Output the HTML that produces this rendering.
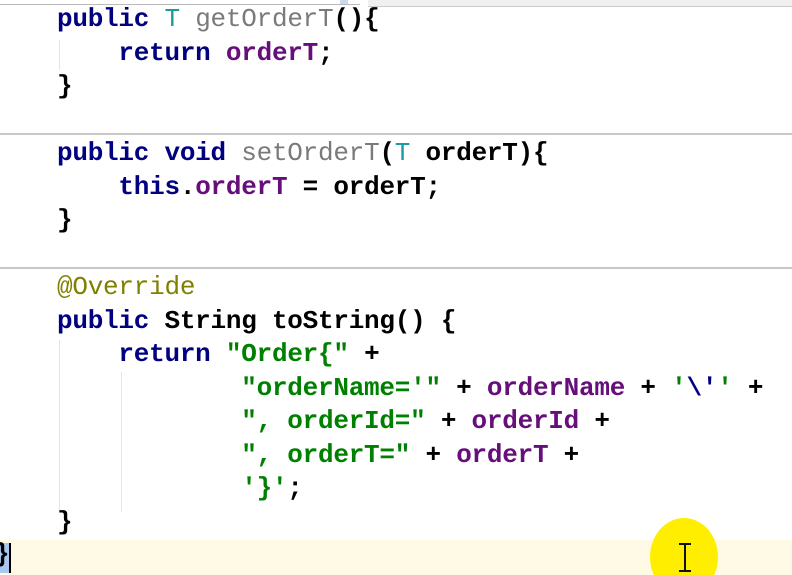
<!DOCTYPE html>
<html><head><meta charset="utf-8"><style>
html,body{margin:0;padding:0;width:792px;height:575px;overflow:hidden;background:#fff;position:relative}
.code{position:absolute;left:57px;top:3px;font-family:"Liberation Mono",monospace;font-size:26px;font-weight:bold;line-height:33.5px;white-space:pre;color:#000;letter-spacing:-0.25px}
.k{color:#000080}.f{color:#660e7a}.s{color:#008000}.g{color:#7a7a7a;font-weight:normal}.t{color:#20999d;font-weight:normal}.a{color:#808000;font-weight:normal}
.sep{position:absolute;left:0;width:792px;height:2px;background:#c8c8c8}
.guide{position:absolute;width:1px;background:#e4e4e4}
</style></head><body>
<div style="position:absolute;left:0;top:4px;width:360px;height:1px;background:#bbb"></div>
<div style="position:absolute;left:340px;top:0;width:8px;height:4px;background:#c9d9ee"></div>
<div style="position:absolute;left:368px;top:0;width:424px;height:6px;background:#f0f0f0;border-bottom:1px solid #ccc"></div>
<div class="sep" style="top:133px"></div>
<div class="sep" style="top:267px"></div>
<div style="position:absolute;left:0;top:540px;width:792px;height:35px;background:#fffae6"></div>
<div style="position:absolute;left:0;top:543px;width:9px;height:30px;background:#a8c8f0"></div>
<div class="guide" style="left:59px;top:40px;height:30px"></div>
<div class="guide" style="left:59px;top:340px;height:170px"></div>
<div class="guide" style="left:121px;top:372px;height:140px"></div>
<div style="position:absolute;left:650px;top:518px;width:68px;height:78px;border-radius:50%;background:#ffee00"></div>
<div style="position:absolute;left:684px;top:544px;width:2px;height:28px;background:#111"></div>
<div style="position:absolute;left:679px;top:543px;width:12px;height:2px;background:#111"></div>
<div style="position:absolute;left:679px;top:570px;width:12px;height:2px;background:#111"></div>
<div class="code"><span class="k">public</span> <span class="t">T</span> <span class="g">getOrderT</span>(){
    <span class="k">return</span> <span class="f">orderT</span>;
}

<span class="k">public void</span> <span class="g">setOrderT</span>(<span class="t">T</span> orderT){
    <span class="k">this</span>.<span class="f">orderT</span> = orderT;
}

<span class="a">@Override</span>
<span class="k">public</span> String toString() {
    <span class="k">return</span> <span class="s">"Order{"</span> +
            <span class="s">"orderName='"</span> + <span class="f">orderName</span> + <span class="s">'<span class="k">\'</span>'</span> +
            <span class="s">", orderId="</span> + <span class="f">orderId</span> +
            <span class="s">", orderT="</span> + <span class="f">orderT</span> +
            <span class="s">'}'</span>;
}
</div>
<div style="position:absolute;left:-6px;top:538px;font-family:'Liberation Mono',monospace;font-size:26px;font-weight:bold;line-height:33.5px">}</div>
<div style="position:absolute;left:9px;top:543px;width:2px;height:30px;background:#000"></div>
</body></html>
